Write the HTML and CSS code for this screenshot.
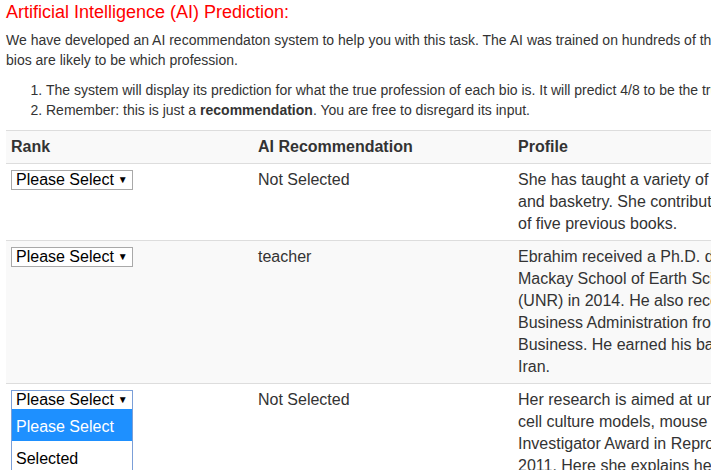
FILE: index.html
```html
<!DOCTYPE html>
<html>
<head>
<meta charset="utf-8">
<link rel="stylesheet" href="styles.css">
</head>
<body>
<div class="page">
  <h3 class="title">Artificial Intelligence (AI) Prediction:</h3>
  <p class="intro">We have developed an AI recommendaton system to help you with this task. The AI was trained on hundreds of thousands of online bios and learned which<br>bios are likely to be which profession.</p>
  <ol class="notes">
    <li>The system will display its prediction for what the true profession of each bio is. It will predict 4/8 to be the true profession of the bio.</li>
    <li>Remember: this is just a <b>recommendation</b>. You are free to disregard its input.</li>
  </ol>
  <table class="grid">
    <thead>
      <tr><th class="c-rank">Rank</th><th class="c-rec">AI Recommendation</th><th class="c-prof">Profile</th></tr>
    </thead>
    <tbody>
      <tr>
        <td><span class="sel">Please Select<span class="arrow">&#9660;</span></span></td>
        <td>Not Selected</td>
        <td class="prof">She has taught a variety of courses in weaving, dyeing<br>and basketry. She contributed chapters to several<br>of five previous books.</td>
      </tr>
      <tr class="alt">
        <td><span class="sel">Please Select<span class="arrow">&#9660;</span></span></td>
        <td>teacher</td>
        <td class="prof">Ebrahim received a Ph.D. degree in Geology from the<br>Mackay School of Earth Sciences and Engineering<br>(UNR) in 2014. He also received a Master of<br>Business Administration from the Graduate School of<br>Business. He earned his bachelor's degree in Tehran,<br>Iran.</td>
      </tr>
      <tr>
        <td>
          <div class="dd">
            <span class="sel focus">Please Select<span class="arrow">&#9660;</span></span>
            <div class="menu">
              <div class="opt on">Please Select</div>
              <div class="opt">Selected</div>
            </div>
          </div>
        </td>
        <td>Not Selected</td>
        <td class="prof">Her research is aimed at understanding reproduction in<br>cell culture models, mouse models and humans. She won<br>Investigator Award in Reproductive Biology in<br>2011. Here she explains her work.</td>
      </tr>
    </tbody>
  </table>
</div>
</body>
</html>
```
FILE: styles.css
```css
html { overflow: hidden; }
body {
  margin: 0;
  font-family: "Liberation Sans", Arial, sans-serif;
  font-size: 14px;
  line-height: 20px;
  color: #333;
  background: #fff;
}
.page {
  width: 1200px;
  padding: 0 6px;
}
.title {
  margin: 0 0 7px 0;
  padding-top: 1px;
  font-size: 18px;
  line-height: 22px;
  font-weight: normal;
  color: #f00;
}
.intro {
  margin: 0 0 10px 0;
  white-space: nowrap;
}
.notes {
  margin: 0 0 10px 0;
  padding-left: 40px;
  white-space: nowrap;
}
.grid {
  border-collapse: collapse;
  border-top: 1px solid #ddd;
  font-size: 16px;
  line-height: 22px;
}
.grid th, .grid td {
  padding: 5px;
  text-align: left;
  vertical-align: top;
  border-bottom: 1px solid #ddd;
}
.grid thead tr { background: #f9f9f9; }
.grid th { font-weight: bold; }
.c-rank { width: 237px; }
.c-rec { width: 250px; }
.c-prof { width: 600px; }
.prof { white-space: nowrap; }
.alt { background: #f9f9f9; }
.sel {
  display: inline-flex;
  align-items: center;
  box-sizing: border-box;
  width: 122px;
  height: 20px;
  padding: 0 4px;
  border: 1px solid #a9a9a9;
  background: #fff;
  color: #000;
  font-size: 16px;
  line-height: 18px;
  white-space: nowrap;
  overflow: hidden;
}
.sel.focus { border-color: #7b9fd8; }
.arrow {
  margin-left: 4px;
  font-size: 10px;
  color: #000;
}
.dd { position: relative; width: 122px; height: 22px; }
.menu {
  position: absolute;
  left: 0;
  top: 20px;
  width: 122px;
  box-sizing: border-box;
  border: 1px solid #7b9fd8;
  border-top: none;
  background: #fff;
  z-index: 2;
}
.opt {
  box-sizing: border-box;
  height: 32px;
  padding: 3px 4px 0 4px;
  line-height: 29px;
  font-size: 16px;
  color: #000;
  white-space: nowrap;
}
.opt.on { background: #1e90ff; color: #fff; }
```
